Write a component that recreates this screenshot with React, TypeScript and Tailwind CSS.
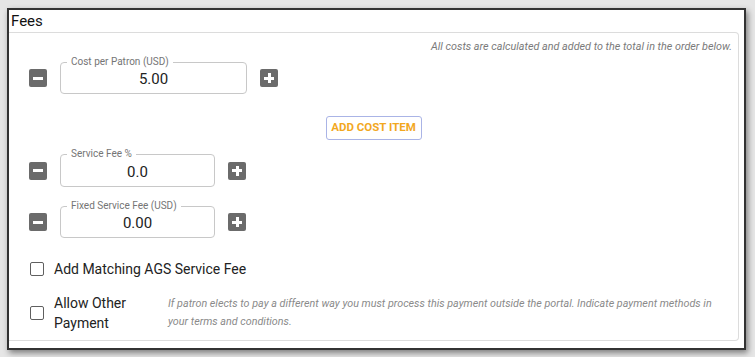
import React, { FC } from 'react'

const StepButton: FC<{ plus?: boolean }> = ({ plus }) => {
  return (
    <button
      type="button"
      className="relative flex items-center justify-center w-[18px] h-[18px] rounded-[2px] bg-[#6b6b6b] shrink-0"
    >
      <span className="block w-[10px] h-[3px] bg-white" />
      {plus && (
        <span className="absolute block w-[3px] h-[10px] bg-white" />
      )}
    </button>
  )
}

const FeeInput: FC<{
  label: string
  value: string
  width: string
  height: string
}> = ({ label, value, width, height }) => {
  return (
    <div
      className={`relative flex items-center justify-center border border-[#c8c8c8] rounded-[4px] ${width} ${height}`}
    >
      <span className="absolute left-[6px] top-[-7px] px-[4px] bg-white text-[10px] leading-[12px] text-[#757575]">
        {label}
      </span>
      <span className="text-[15px] leading-[18px] text-[#222] pt-[2px]">
        {value}
      </span>
    </div>
  )
}

const FeeRow: FC<{
  label: string
  value: string
  width: string
  height: string
  className?: string
}> = ({ label, value, width, height, className }) => {
  return (
    <div className={`flex items-center gap-[13px] ${className ?? ''}`}>
      <StepButton />
      <FeeInput label={label} value={value} width={width} height={height} />
      <StepButton plus />
    </div>
  )
}

const Checkbox: FC = () => (
  <span className="block w-[14px] h-[14px] border-[1.5px] border-[#5f5f5f] rounded-[2px] shrink-0" />
)

const App: FC = () => {
  return (
    <div className="w-[755px] h-[357px] bg-[#e6e6e6] pt-[8px] pl-[7px] font-['Roboto',sans-serif]">
      <div className="flex flex-col w-[739px] h-[342px] bg-white border-2 border-[#333] shadow-[2px_3px_6px_rgba(0,0,0,0.45)]">
        <div className="h-[22px] pl-[2px] pt-[2px] text-[15px] leading-[18px] text-[#111]">
          Fees
        </div>
        <div className="flex flex-col flex-1 mr-[5px] mb-[7px] border border-l-0 border-[#dcdcdc] rounded-r-[4px] pl-[20px] pt-[7px]">
          <p className="pr-[6px] text-right text-[10.8px] leading-[14px] italic text-[#7a7a7a]">
            All costs are calculated and added to the total in the order below.
          </p>
          <FeeRow
            className="mt-[8px]"
            label="Cost per Patron (USD)"
            value="5.00"
            width="w-[187px]"
            height="h-[32px]"
          />
          <div className="flex justify-center mt-[22px] pr-[20px]">
            <button
              type="button"
              className="w-[96px] h-[24px] border border-[#aab4e6] rounded-[3px] text-[11.5px] font-bold text-[#f2a81f]"
            >
              ADD COST ITEM
            </button>
          </div>
          <FeeRow
            className="mt-[14px]"
            label="Service Fee %"
            value="0.0"
            width="w-[155px]"
            height="h-[33px]"
          />
          <FeeRow
            className="mt-[19px]"
            label="Fixed Service Fee (USD)"
            value="0.00"
            width="w-[155px]"
            height="h-[32px]"
          />
          <label className="flex items-center gap-[10px] mt-[21px] pl-[1px] text-[14px] leading-[20px] text-[#222]">
            <Checkbox />
            Add Matching AGS Service Fee
          </label>
          <div className="flex items-center mt-[14px] pl-[1px]">
            <Checkbox />
            <span className="w-[100px] ml-[10px] text-[14px] leading-[20px] text-[#222]">
              Allow Other Payment
            </span>
            <p className="ml-[14px] w-[560px] text-[10.75px] leading-[18px] italic text-[#8a8a8a]">
              If patron elects to pay a different way you must process this
              payment outside the portal. Indicate payment methods in your terms
              and conditions.
            </p>
          </div>
        </div>
      </div>
    </div>
  )
}

export default App
